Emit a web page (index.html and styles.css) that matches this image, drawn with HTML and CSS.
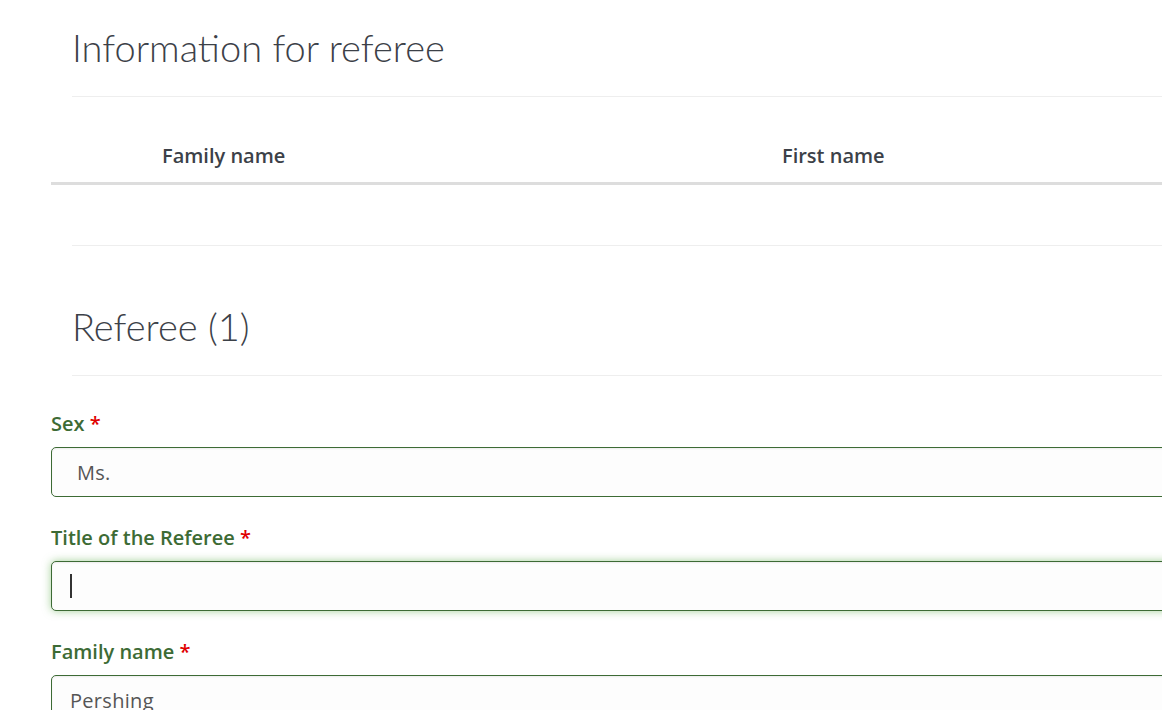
FILE: index.html
```html
<!DOCTYPE html>
<html lang="en">
<head>
<meta charset="utf-8">
<title>Referee</title>
<link rel="stylesheet" href="styles.css">
</head>
<body>
<div class="page">
  <h2 class="section-title first">Information for referee</h2>
  <div class="table">
    <div class="thead">
      <div class="th col-family">Family name</div>
      <div class="th col-first">First name</div>
    </div>
  </div>
  <div class="spacer"></div>
  <h2 class="section-title second">Referee (1)</h2>
  <form class="form">
    <div class="field">
      <label class="label">Sex <span class="req">*</span></label>
      <div class="control select">Ms.</div>
    </div>
    <div class="field">
      <label class="label">Title of the Referee <span class="req">*</span></label>
      <div class="control focused"><span class="caret"></span></div>
    </div>
    <div class="field">
      <label class="label">Family name <span class="req">*</span></label>
      <div class="control">Pershing</div>
    </div>
  </form>
</div>
</body>
</html>
```
FILE: styles.css
```css
html, body {
  margin: 0;
  padding: 0;
  overflow: hidden;
  background: #fff;
}
body {
  font-family: "Open Sans", Lato, sans-serif;
  color: #3c4148;
}
.page {
  width: 1400px;
  padding-left: 51px;
}
.section-title {
  margin: 0 0 0 21px;
  font-family: Lato, "Open Sans", sans-serif;
  font-size: 38px;
  line-height: 48px;
  font-weight: 300;
  color: #3c4148;
  border-bottom: 1px solid #eeeeee;
  padding-bottom: 25px;
}
.section-title.first {
  padding-top: 23px;
}
.section-title.second {
  padding-top: 56px;
}
.thead {
  display: flex;
  border-bottom: 3px solid #dddddd;
}
.th {
  font-size: 20px;
  line-height: 24px;
  font-weight: 600;
  color: #3c4148;
  padding: 47px 0 14px;
}
.col-family {
  box-sizing: border-box;
  padding-left: 111px;
  width: 720px;
}
.col-first {
  padding-left: 11px;
}
.spacer {
  margin-left: 21px;
  height: 60px;
  border-bottom: 1px solid #eeeeee;
}
.form {
  padding-top: 36px;
}
.field {
  display: flex;
  flex-direction: column;
  margin-bottom: 29px;
}
.label {
  font-size: 20px;
  line-height: 24px;
  font-weight: 600;
  color: #3d6b35;
  margin-bottom: 11px;
}
.req {
  color: #e00000;
}
.control {
  box-sizing: border-box;
  width: 1250px;
  height: 50px;
  border: 1px solid #3d6b35;
  border-radius: 5px;
  background: #fdfdfd;
  box-shadow: inset 0 1px 2px rgba(0, 0, 0, 0.07);
  font-size: 20px;
  letter-spacing: 0.3px;
  color: #555555;
  padding: 0 18px;
  display: flex;
  align-items: center;
}
.control.select {
  padding-left: 25px;
}
.control.focused {
  box-shadow: inset 0 1px 2px rgba(0, 0, 0, 0.07), 0 0 8px rgba(90, 170, 70, 0.55);
}
.caret {
  display: inline-block;
  width: 2px;
  height: 24px;
  background: #333333;
}
```
